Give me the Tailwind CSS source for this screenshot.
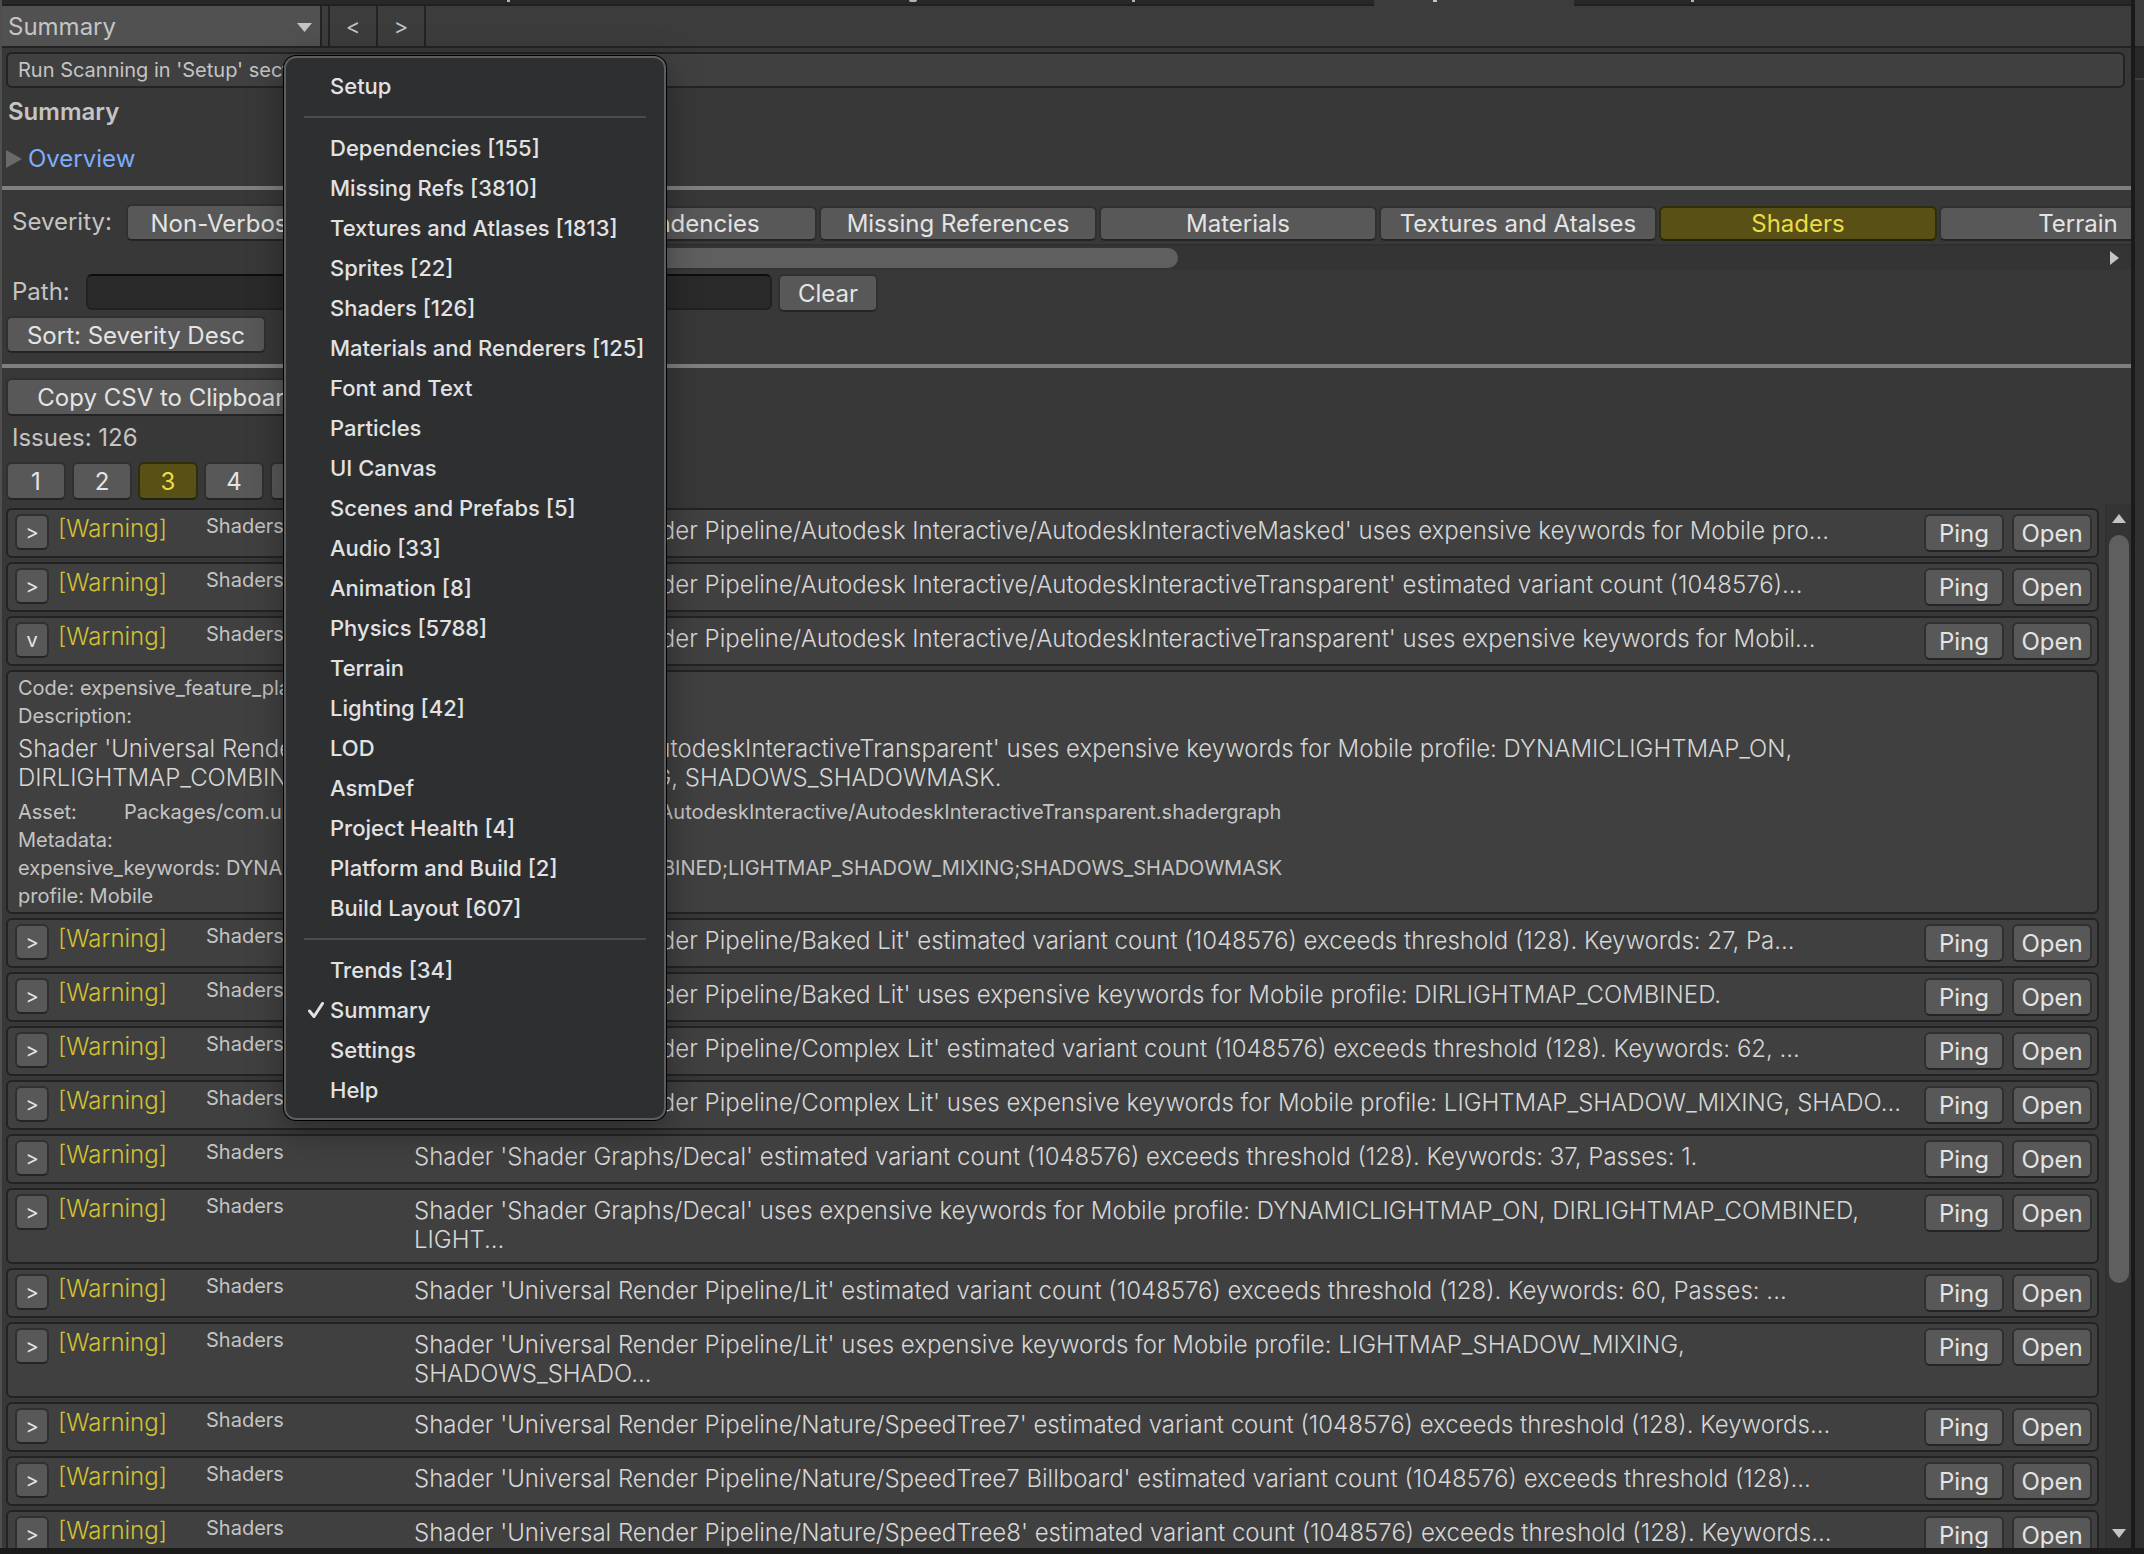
<!DOCTYPE html>
<html lang="en">
  <head>
    <meta charset="UTF-8" />
    <meta name="viewport" content="width=device-width, initial-scale=1.0" />
    <script src="https://cdn.jsdelivr.net/npm/@tailwindcss/browser@4"></script>
    <title>Project Auditor - Summary</title>
  </head>
  <body class="h-screen overflow-hidden bg-[#1a1a1a] font-['Inter',sans-serif] text-[24px] leading-7 text-[#c4c4c4]">
    <div class="flex h-screen gap-1 pb-1.5">
      <!-- Main window -->
      <main class="relative flex min-w-0 flex-1 flex-col border-l-2 border-[#4f4f4f] bg-[#383838]">
        <!-- Dock tabs, cut off by the window edge: only the tails of their labels show -->
        <div class="flex h-1.5 shrink-0 overflow-hidden bg-[#282828]">
          <div class="flex w-[1372px] shrink-0 border-b-2 border-[#202020]">
            <i class="ml-[505px] h-0.5 w-[3px] bg-[#b4b4b4]"></i>
            <i class="ml-[399px] h-0.5 w-2 rounded-b-full bg-[#b4b4b4]"></i>
            <i class="ml-[215px] h-0.5 w-[3px] bg-[#b4b4b4]"></i>
          </div>
          <div class="w-[200px] shrink-0 bg-[#3c3c3c]">
            <i class="ml-[59px] block h-0.5 w-1 bg-[#c4c4c4]"></i>
          </div>
          <div class="flex-1 border-b-2 border-[#202020]">
            <i class="ml-[117px] block h-0.5 w-[3px] bg-[#b4b4b4]"></i>
          </div>
        </div>

        <!-- Toolbar -->
        <div class="flex h-[42px] shrink-0 border-b-2 border-[#232323] bg-[#3c3c3c]">
          <button id="view" aria-haspopup="menu" class="flex w-80 items-center justify-between border-r-2 border-[#232323] bg-[#515151] pt-0.5 pr-2 pl-1.5 text-left">
            Summary
            <svg class="h-[9px] w-[15px] fill-[#c4c4c4]" viewBox="0 0 15 9"><path d="M0 0h15L7.500 9z" /></svg>
          </button>
          <button aria-label="Back" class="ml-1.5 w-[50px] border-x-2 border-[#232323] text-[22px]">&lt;</button>
          <button aria-label="Forward" class="w-12 border-r-2 border-[#232323] text-[22px]">&gt;</button>
        </div>

        <p class="mx-1 mt-1 mr-1.5 h-9 shrink-0 rounded-md border-2 border-[#232323] bg-[#404040] px-2.5 text-[20px] leading-8">Run Scanning in 'Setup' section</p>
        <h1 class="mt-1.5 h-9 shrink-0 px-1.5 leading-9 font-semibold">Summary</h1>
        <a href="#overview" class="mt-2.5 flex h-9 shrink-0 items-center gap-1.5 px-1 pt-0.5 text-[#7fadf7]">
          <svg class="h-[18px] w-4 fill-[#6a6a6a]" viewBox="0 0 16 18"><path d="M0 0v18l16-9z" /></svg>
          Overview
        </a>
        <hr class="mt-2.5 shrink-0 border-t-4 border-[#7f7f7f]" />

        <!-- Filters -->
        <div class="mt-3.5 flex h-[66px] shrink-0 items-start">
          <span class="w-[124px] shrink-0 pl-2.5 leading-9">Severity:</span>
          <button class="mr-1 h-[37px] w-[200px] shrink-0 rounded-md border-2 border-[#303030] border-b-[#242424] bg-[#585858] pt-0.5 text-[#e4e4e4]">Non-Verbose</button>
          <div class="min-w-0 flex-1">
            <div class="flex gap-0.5 overflow-hidden pt-0.5">
              <button class="h-[35px] w-[207px] shrink-0 rounded-md border-2 border-[#303030] border-b-[#242424] bg-[#585858] text-[#e4e4e4]">All</button>
              <button class="h-[35px] w-[278px] shrink-0 rounded-md border-2 border-[#303030] border-b-[#242424] bg-[#585858] text-[#e4e4e4]">Dependencies</button>
              <button class="h-[35px] w-[278px] shrink-0 rounded-md border-2 border-[#303030] border-b-[#242424] bg-[#585858] text-[#e4e4e4]">Missing References</button>
              <button class="h-[35px] w-[278px] shrink-0 rounded-md border-2 border-[#303030] border-b-[#242424] bg-[#585858] text-[#e4e4e4]">Materials</button>
              <button class="h-[35px] w-[278px] shrink-0 rounded-md border-2 border-[#303030] border-b-[#242424] bg-[#585858] text-[#e4e4e4]">Textures and Atalses</button>
              <button class="h-[35px] w-[278px] shrink-0 rounded-md border-2 border-[#302d0c] border-b-[#242209] bg-[#585015] text-[#ebdc45]">Shaders</button>
              <button class="h-[35px] w-[278px] shrink-0 rounded-md border-2 border-[#303030] border-b-[#242424] bg-[#585858] text-[#e4e4e4]">Terrain</button>
            </div>
            <div class="mt-[3px] flex h-[26px] items-center justify-between border-t-2 border-[#303030] bg-[#343434] pr-3">
              <div class="h-5 w-[848px] rounded-full bg-[#5f5f5f]"></div>
              <svg class="h-3.5 w-[9px] fill-[#c4c4c4]" viewBox="0 0 9 14"><path d="M0 0v14l9-7z" /></svg>
            </div>
          </div>
        </div>
        <div class="mt-1 flex h-[38px] shrink-0 items-start">
          <label for="path" class="w-[84px] pl-2.5 leading-9">Path:</label>
          <input id="path" type="text" class="mr-1.5 h-9 w-[686px] rounded-md border-2 border-[#212121] border-t-[#0d0d0d] bg-[#2a2a2a] px-2" />
          <button class="h-[38px] w-[100px] rounded-md border-2 border-[#303030] border-b-[#242424] bg-[#585858] pt-0.5 text-[#e4e4e4]">Clear</button>
        </div>
        <button class="mt-1 ml-1 h-[37px] w-[260px] shrink-0 rounded-md border-2 border-[#303030] border-b-[#242424] bg-[#585858] pt-0.5 text-[#e4e4e4]">Sort: Severity Desc</button>
        <hr class="mt-[11px] shrink-0 border-t-4 border-[#7f7f7f]" />

        <!-- Issue list header -->
        <button class="mt-2.5 ml-1 h-[38px] w-[324px] shrink-0 rounded-md border-2 border-[#303030] border-b-[#242424] bg-[#585858] pt-0.5 text-[#e4e4e4]">Copy CSV to Clipboard</button>
        <p class="mt-2 h-7 shrink-0 pl-2.5">Issues: 126</p>
        <nav aria-label="Pages" class="mt-2.5 flex shrink-0 gap-1.5 pl-1">
          <button class="h-[38px] w-15 rounded-md border-2 border-[#303030] border-b-[#242424] bg-[#585858] pt-0.5 text-[#e4e4e4]">1</button>
          <button class="h-[38px] w-15 rounded-md border-2 border-[#303030] border-b-[#242424] bg-[#585858] pt-0.5 text-[#e4e4e4]">2</button>
          <button class="h-[38px] w-15 rounded-md border-2 border-[#302d0c] border-b-[#242209] bg-[#585015] pt-0.5 text-[#ebdc45]">3</button>
          <button class="h-[38px] w-15 rounded-md border-2 border-[#303030] border-b-[#242424] bg-[#585858] pt-0.5 text-[#e4e4e4]">4</button>
          <button class="h-[38px] w-15 rounded-md border-2 border-[#303030] border-b-[#242424] bg-[#585858] pt-0.5 text-[#e4e4e4]">5</button>
        </nav>

        <div class="mt-1 flex min-h-0 flex-1">
          <ul id="issues" class="flex min-w-0 flex-1 flex-col gap-1 overflow-hidden pt-1 pl-1"></ul>
          <!-- Scrollbar -->
          <div class="ml-1.5 flex w-[26px] shrink-0 flex-col items-center border-l-2 border-[#303030] bg-[#343434] py-2.5">
            <svg class="h-[9px] w-3.5 fill-[#c4c4c4]" viewBox="0 0 14 9"><path d="M0 9h14L7 0z" /></svg>
            <div class="mt-3 h-[748px] w-5 rounded-full bg-[#5f5f5f]"></div>
            <svg class="mt-auto h-[9px] w-3.5 fill-[#c4c4c4]" viewBox="0 0 14 9"><path d="M0 0h14L7 9z" /></svg>
          </div>
        </div>

        <!-- View popup -->
        <div id="menu" role="menu" class="absolute top-14 left-[282px] flex w-[382px] flex-col rounded-xl border-2 border-[#5c5d5e] bg-[#2e2f31] py-2 text-[22px] font-medium text-[#e2e2e2] shadow-[0_0_0_1px_#000,0_10px_36px_rgba(0,0,0,0.35)]"></div>
      </main>

      <!-- Neighbouring panel -->
      <aside class="flex w-[9px] shrink-0 flex-col bg-[#303030]">
        <div class="h-12 border-b-2 border-[#232323] bg-[#3c3c3c]"></div>
        <div class="h-8 border-b-2 border-[#3f3f3f] bg-[#282828]"></div>
      </aside>
    </div>

    <script>
      const menu = [
        'Setup', '-',
        'Dependencies [155]', 'Missing Refs [3810]', 'Textures and Atlases [1813]', 'Sprites [22]', 'Shaders [126]',
        'Materials and Renderers [125]', 'Font and Text', 'Particles', 'UI Canvas', 'Scenes and Prefabs [5]',
        'Audio [33]', 'Animation [8]', 'Physics [5788]', 'Terrain', 'Lighting [42]', 'LOD', 'AsmDef',
        'Project Health [4]', 'Platform and Build [2]', 'Build Layout [607]', '-',
        'Trends [34]', 'Summary', 'Settings', 'Help',
      ];
      const current = 'Summary';

      const urp = "Shader 'Universal Render Pipeline/";
      const issues = [
        { text: [urp + "Autodesk Interactive/AutodeskInteractiveMasked' uses expensive keywords for Mobile pro..."] },
        { text: [urp + "Autodesk Interactive/AutodeskInteractiveTransparent' estimated variant count (1048576)..."] },
        { text: [urp + "Autodesk Interactive/AutodeskInteractiveTransparent' uses expensive keywords for Mobil..."], open: true },
        { text: [urp + "Baked Lit' estimated variant count (1048576) exceeds threshold (128). Keywords: 27, Pa..."] },
        { text: [urp + "Baked Lit' uses expensive keywords for Mobile profile: DIRLIGHTMAP_COMBINED."] },
        { text: [urp + "Complex Lit' estimated variant count (1048576) exceeds threshold (128). Keywords: 62, ..."] },
        { text: [urp + "Complex Lit' uses expensive keywords for Mobile profile: LIGHTMAP_SHADOW_MIXING, SHADO..."] },
        { text: ["Shader 'Shader Graphs/Decal' estimated variant count (1048576) exceeds threshold (128). Keywords: 37, Passes: 1."] },
        { text: ["Shader 'Shader Graphs/Decal' uses expensive keywords for Mobile profile: DYNAMICLIGHTMAP_ON, DIRLIGHTMAP_COMBINED,", 'LIGHT...'] },
        { text: [urp + "Lit' estimated variant count (1048576) exceeds threshold (128). Keywords: 60, Passes: ..."] },
        { text: [urp + "Lit' uses expensive keywords for Mobile profile: LIGHTMAP_SHADOW_MIXING,", 'SHADOWS_SHADO...'] },
        { text: [urp + "Nature/SpeedTree7' estimated variant count (1048576) exceeds threshold (128). Keywords..."] },
        { text: [urp + "Nature/SpeedTree7 Billboard' estimated variant count (1048576) exceeds threshold (128)..."] },
        { text: [urp + "Nature/SpeedTree8' estimated variant count (1048576) exceeds threshold (128). Keywords..."] },
      ];

      const details = `
        <li class="h-[244px] shrink-0 rounded-md border-2 border-[#232323] bg-[#404040] px-2.5 pt-0.5 text-[20px]">
          <p>Code: expensive_feature_platform</p>
          <p>Description:</p>
          <p class="mt-1 mb-1.5 text-[24px] leading-[29px] font-light text-[#d6d6d6]">Shader 'Universal Render Pipeline/Autodesk Interactive/AutodeskInteractiveTransparent' uses expensive keywords for Mobile profile: DYNAMICLIGHTMAP_ON,<br />DIRLIGHTMAP_COMBINED, LIGHTMAP_SHADOW_MIXING, SHADOWS_SHADOWMASK.</p>
          <p class="flex"><span class="w-[106px]">Asset:</span>Packages/com.unity.render-pipelines.universal/Shaders/AutodeskInteractive/AutodeskInteractiveTransparent.shadergraph</p>
          <p>Metadata:</p>
          <p>expensive_keywords: DYNAMICLIGHTMAP_ON;DIRLIGHTMAP_COMBINED;LIGHTMAP_SHADOW_MIXING;SHADOWS_SHADOWMASK</p>
          <p>profile: Mobile</p>
        </li>`;

      document.getElementById('issues').innerHTML = issues.map((issue) => `
        <li class="flex min-h-[50px] shrink-0 items-start rounded-md border-2 border-[#232323] bg-[#404040] pt-1 pr-[5px] pl-[7px]">
          <button aria-label="Toggle details" class="h-9 w-[34px] shrink-0 rounded-md border-2 border-[#303030] border-b-[#242424] bg-[#585858] text-[20px] text-[#e4e4e4]">${issue.open ? 'v' : '&gt;'}</button>
          <span class="ml-[9px] w-[148px] shrink-0 pt-px font-light text-[#d2c232]">[Warning]</span>
          <span class="w-[208px] shrink-0 text-[20px] leading-6">Shaders</span>
          <p class="min-w-0 flex-1 pt-0.5 pb-2 leading-[29px] font-light whitespace-nowrap text-[#d6d6d6]">${issue.text.join('<br />')}</p>
          <button class="ml-2 h-[38px] w-20 shrink-0 rounded-md border-2 border-[#303030] border-b-[#242424] bg-[#585858] pt-0.5 text-[#e4e4e4]">Ping</button>
          <button class="ml-2 h-[38px] w-20 shrink-0 rounded-md border-2 border-[#303030] border-b-[#242424] bg-[#585858] pt-0.5 text-[#e4e4e4]">Open</button>
        </li>${issue.open ? details : ''}`).join('');

      document.getElementById('menu').innerHTML = menu.map((item) => item === '-'
        ? '<hr class="mx-[18px] my-2.5 border-t-2 border-[#4b4c4e]" />'
        : `<button role="menuitem" class="flex h-10 items-center pl-11 text-left whitespace-nowrap">
            ${item === current ? '<svg class="-ml-[22px] mr-1.5 h-4 w-4 fill-none stroke-[#e2e2e2] stroke-[3]" viewBox="0 0 16 16"><path d="M1.500 9l4.500 5.500L14.500 1.500" stroke-linecap="round" stroke-linejoin="round" /></svg>' : ''}${item}
          </button>`).join('');
    </script>
  </body>
</html>
